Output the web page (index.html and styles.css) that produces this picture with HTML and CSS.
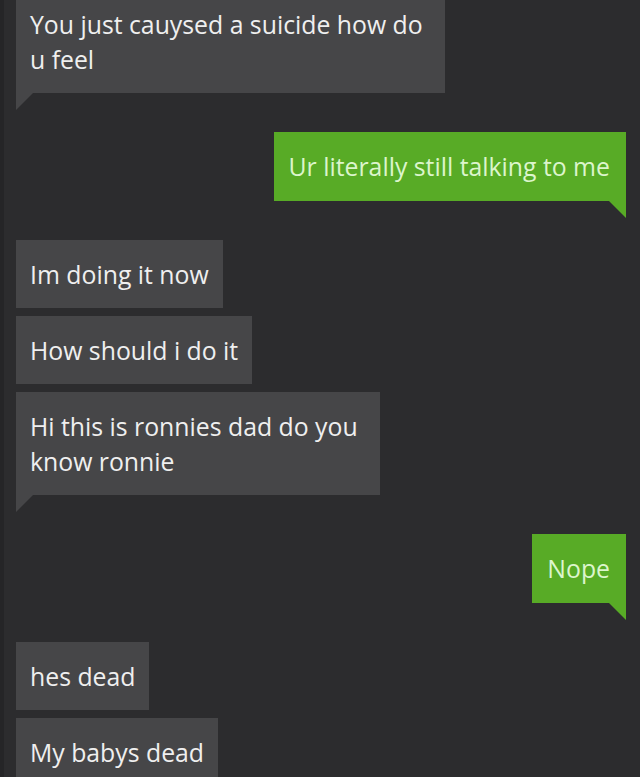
FILE: index.html
```html
<!DOCTYPE html>
<html lang="en">
<head>
<meta charset="utf-8">
<title>Messages</title>
<link rel="stylesheet" href="styles.css">
</head>
<body>
<main class="thread">
  <section class="group in">
    <div class="bubble in tail wrap">You just cauysed a suicide how do<br>u feel</div>
  </section>
  <section class="group out">
    <div class="bubble out tail">Ur literally still talking to me</div>
  </section>
  <section class="group in">
    <div class="bubble in">Im doing it now</div>
    <div class="bubble in">How should i do it</div>
    <div class="bubble in tail wrap">Hi this is ronnies dad do you<br>know ronnie</div>
  </section>
  <section class="group out">
    <div class="bubble out tail">Nope</div>
  </section>
  <section class="group in">
    <div class="bubble in">hes dead</div>
    <div class="bubble in">My babys dead</div>
  </section>
</main>
</body>
</html>
```

FILE: styles.css
```css
html, body {
  margin: 0;
  padding: 0;
  height: 100%;
  overflow: hidden;
}
body {
  background: #2c2c2e;
  font-family: "Open Sans", "Noto Sans", sans-serif;
  font-size: 24.8px;
  line-height: 35px;
  color: #efefef;
  box-shadow: inset 4px 0 0 #252527;
}
.thread {
  display: flex;
  flex-direction: column;
  gap: 39px;
  padding: 0 14px 0 16px;
  margin-top: -10px;
}
.group {
  display: flex;
  flex-direction: column;
  gap: 8px;
}
.group.in { align-items: flex-start; }
.group.out { align-items: flex-end; }
.bubble {
  position: relative;
  padding: 17px 14px 16px 14px;
  white-space: nowrap;
}
.bubble.wrap { padding-right: 22px; }
.bubble.in { background: #464648; }
.bubble.out {
  background: #58ab26;
  color: #dcf5cc;
  padding: 17px 16px 17px 15px;
}
.bubble.tail::after {
  content: "";
  position: absolute;
  top: 100%;
  width: 0;
  height: 0;
}
.bubble.in.tail::after {
  left: 0;
  border-top: 17px solid #464648;
  border-right: 17px solid transparent;
}
.bubble.out.tail::after {
  right: 0;
  border-top: 17px solid #58ab26;
  border-left: 17px solid transparent;
}
```
